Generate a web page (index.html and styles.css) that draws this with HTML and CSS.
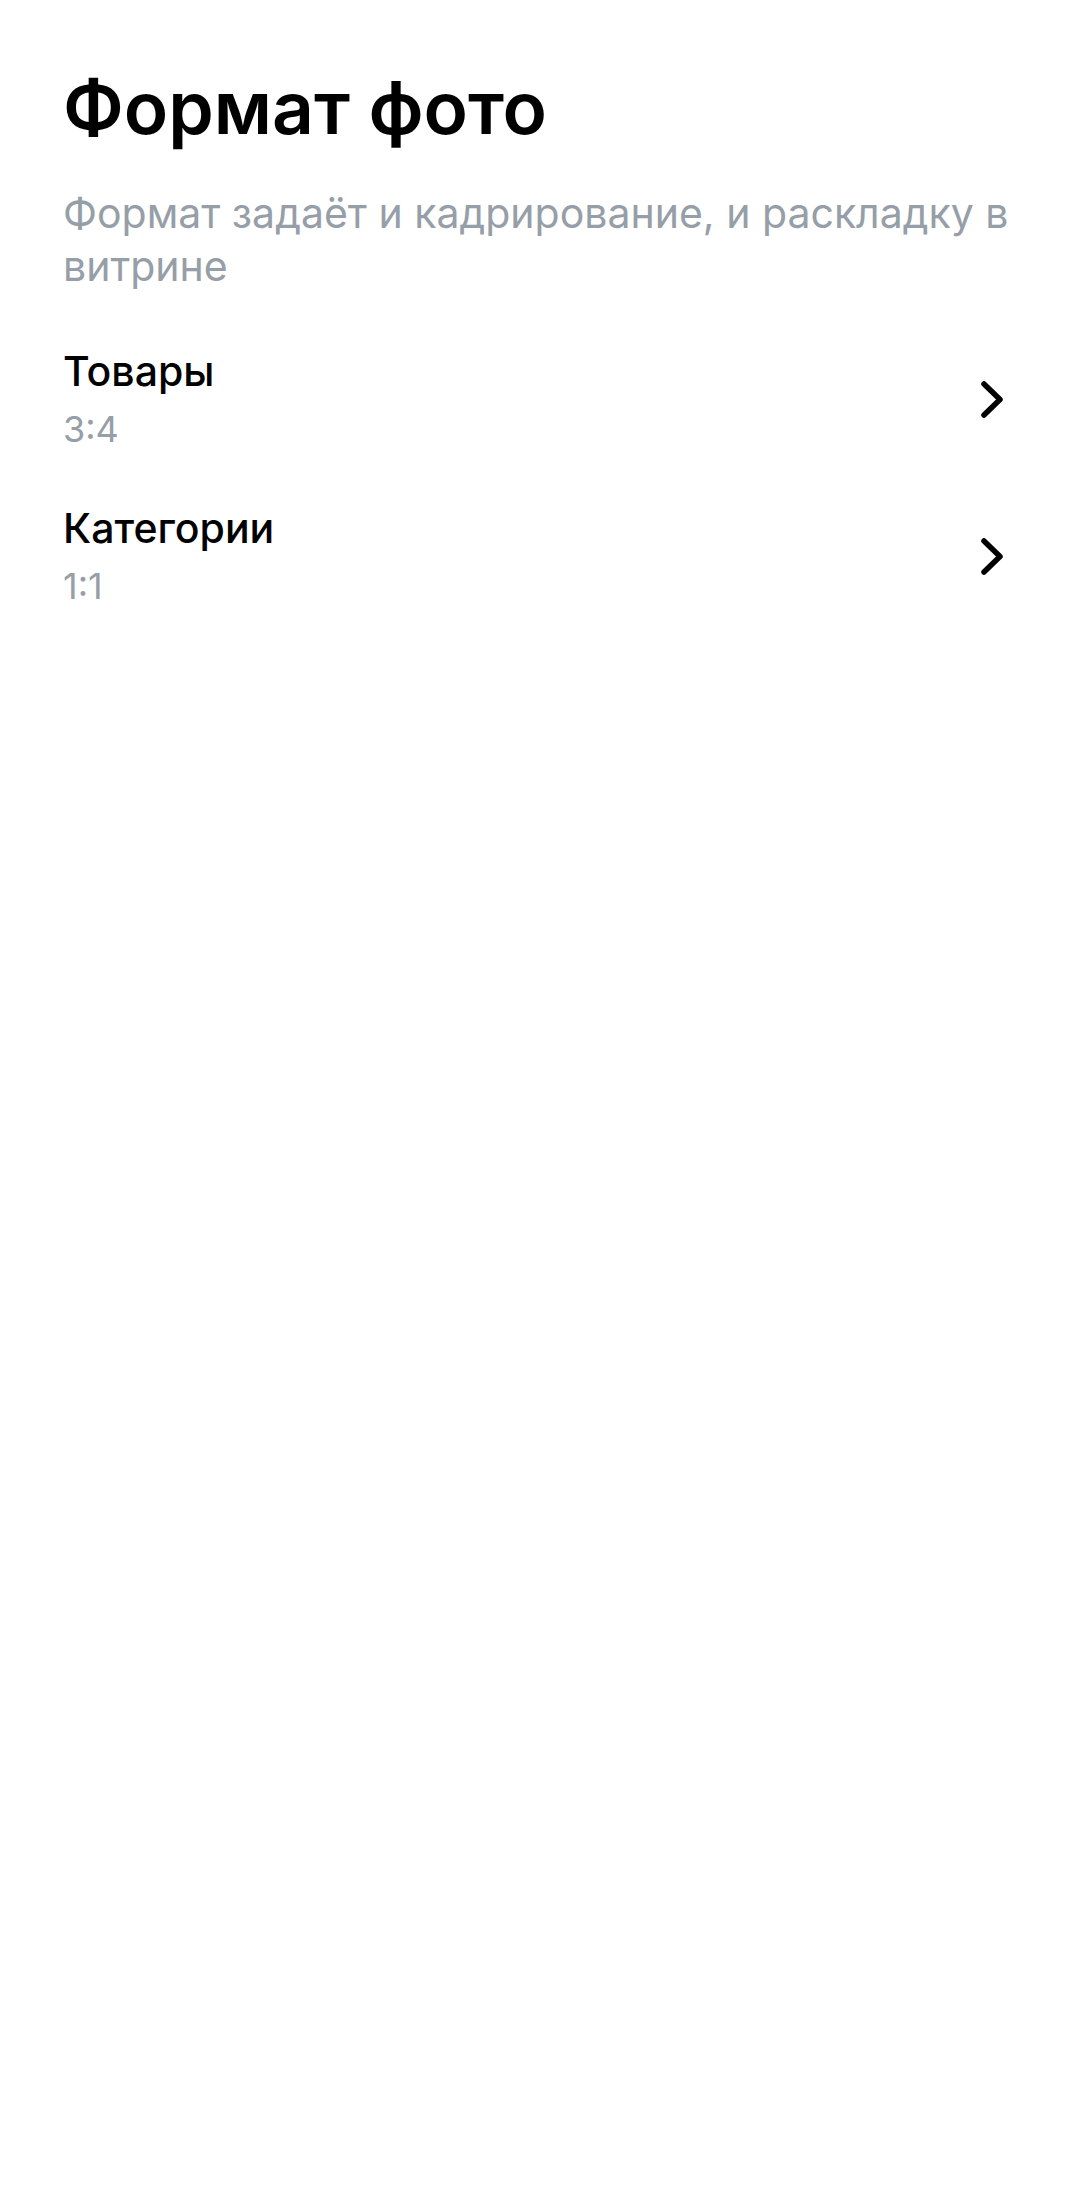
FILE: index.html
```html
<!DOCTYPE html>
<html lang="ru">
  <head>
    <meta charset="utf-8">
    <meta name="viewport" content="width=device-width, initial-scale=1">
    <title>Формат фото</title>
    <link rel="stylesheet" href="styles.css">
  </head>
  <body>
    <main class="page">
      <h1 class="title">Формат фото</h1>
      <p class="hint">Формат задаёт и кадрирование, и раскладку в витрине</p>

      <div class="list">
        <button class="row" type="button">
          <span class="row-text">
            <span class="row-name">Товары</span>
            <span class="row-value">3:4</span>
          </span>
          <svg class="chevron" viewBox="0 0 54 54" aria-hidden="true"><path d="M19 11 L35 26.5 L19 42"/></svg>
        </button>
        <button class="row" type="button">
          <span class="row-text">
            <span class="row-name">Категории</span>
            <span class="row-value">1:1</span>
          </span>
          <svg class="chevron" viewBox="0 0 54 54" aria-hidden="true"><path d="M19 11 L35 26.5 L19 42"/></svg>
        </button>
      </div>
    </main>
  </body>
</html>
```
FILE: styles.css
```css
* { box-sizing: border-box; }
body { margin: 0; background: #fff; color: #000; font-family: Inter, Roboto, 'Liberation Sans', sans-serif; }

.page { padding: 63px; }

.title { margin: 0; font-size: 73px; line-height: 90px; font-weight: 600; }
.hint { margin: 34px 0 0; font-size: 41px; line-height: 53px; font-weight: 400; color: #969ea7; }

.list { margin-top: 28px; }
.row { display: flex; align-items: center; justify-content: space-between; width: 100%; padding: 24px 0; border: none; background: none; color: inherit; font: inherit; text-align: left; cursor: pointer; }
.row-text { display: flex; flex-direction: column; gap: 6px; }
.row-name { font-size: 41px; line-height: 53px; font-weight: 500; }
.row-value { font-size: 36px; line-height: 50px; color: #969ea7; }

.chevron { flex: none; width: 54px; height: 54px; fill: none; stroke: #000; stroke-width: 5.5; stroke-linecap: round; stroke-linejoin: round; }
```
